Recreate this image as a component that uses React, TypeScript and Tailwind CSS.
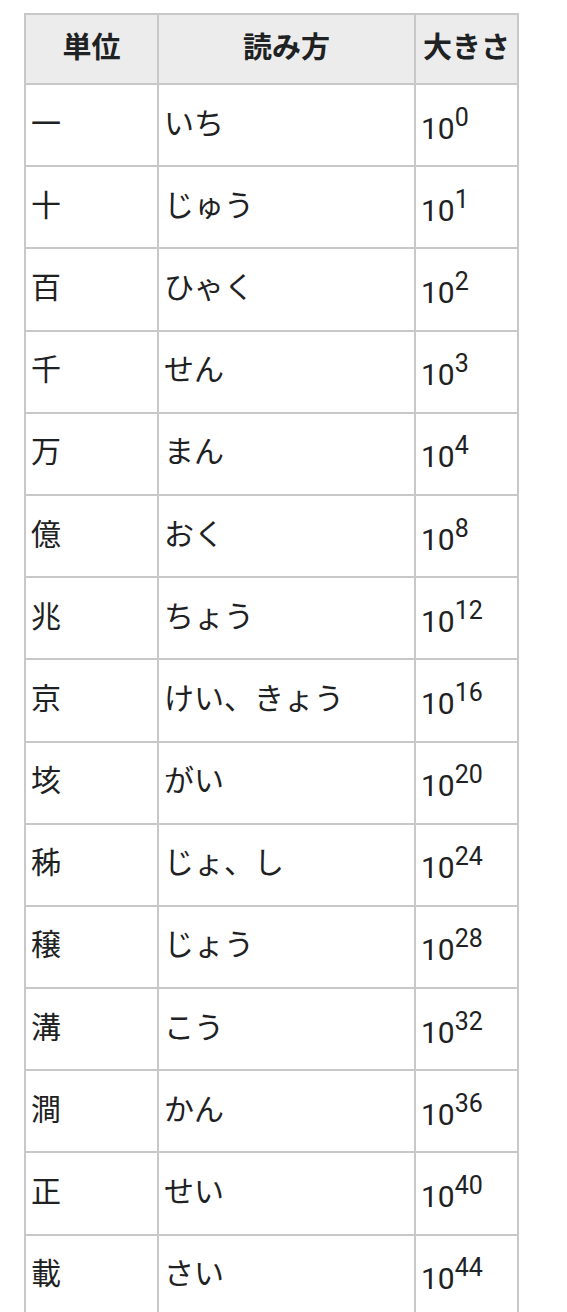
import React from "react";

interface UnitRow {
  kanji: string;
  reading: string;
  exp: string;
}

const rows: UnitRow[] = [
  { kanji: "一", reading: "いち", exp: "0" },
  { kanji: "十", reading: "じゅう", exp: "1" },
  { kanji: "百", reading: "ひゃく", exp: "2" },
  { kanji: "千", reading: "せん", exp: "3" },
  { kanji: "万", reading: "まん", exp: "4" },
  { kanji: "億", reading: "おく", exp: "8" },
  { kanji: "兆", reading: "ちょう", exp: "12" },
  { kanji: "京", reading: "けい、きょう", exp: "16" },
  { kanji: "垓", reading: "がい", exp: "20" },
  { kanji: "秭", reading: "じょ、し", exp: "24" },
  { kanji: "穣", reading: "じょう", exp: "28" },
  { kanji: "溝", reading: "こう", exp: "32" },
  { kanji: "澗", reading: "かん", exp: "36" },
  { kanji: "正", reading: "せい", exp: "40" },
  { kanji: "載", reading: "さい", exp: "44" },
];

export default function App() {
  return (
    <div className="min-h-screen bg-white pt-[13px] pl-[24px] font-['Roboto','Noto_Sans_CJK_JP',sans-serif] text-[30px] text-[#202122]">
      <table className="table-fixed border-collapse w-[495px]">
        <colgroup>
          <col className="w-[133px]" />
          <col className="w-[257px]" />
          <col className="w-[103px]" />
        </colgroup>
        <thead>
          {/* header */}
          <tr className="h-[70px] bg-[#ececec]">
            <th className="border-2 border-[#c8c8c8] font-bold text-center p-0 text-[29px]">単位</th>
            <th className="border-2 border-[#c8c8c8] font-bold text-center p-0 text-[29px]">読み方</th>
            <th className="border-2 border-[#c8c8c8] font-bold text-center p-0 text-[29px]">大きさ</th>
          </tr>
        </thead>
        <tbody>
          {rows.map((r) => (
            <tr key={r.kanji} className="h-[82.2px]">
              <td className="border-2 border-[#c8c8c8] px-[5px] pb-[4px] align-middle">{r.kanji}</td>
              <td className="border-2 border-[#c8c8c8] px-[5px] pb-[4px] align-middle">{r.reading}</td>
              <td className="border-2 border-[#c8c8c8] px-[5px] pt-[5px] align-middle whitespace-nowrap">
                10<sup className="static text-[25px] leading-none align-[13px]">{r.exp}</sup>
              </td>
            </tr>
          ))}
        </tbody>
      </table>
    </div>
  );
}
